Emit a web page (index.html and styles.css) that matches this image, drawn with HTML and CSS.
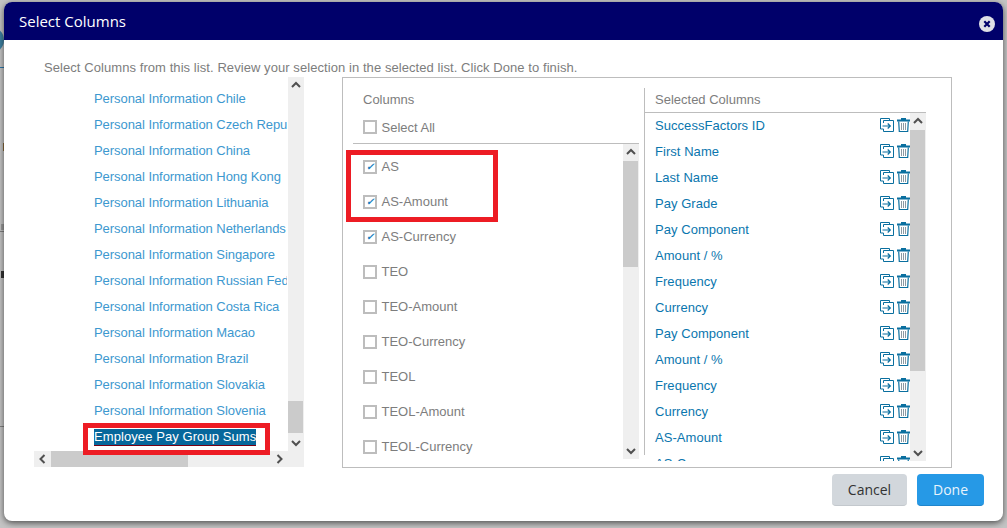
FILE: index.html
```html
<!DOCTYPE html>
<html lang="en">
<head>
<meta charset="utf-8">
<title>Select Columns</title>
<link rel="stylesheet" href="styles.css">
</head>
<body>
<svg class="defs" width="0" height="0" aria-hidden="true">
  <symbol id="mv" viewBox="0 0 14 14">
    <path d="M9.500 2V.5H.5v10.500H3.500" fill="none" stroke="#0a6f9f" stroke-width="1"/>
    <path d="M3.500 5V2.500h10v11h-10V11" fill="none" stroke="#0a6f9f" stroke-width="1"/>
    <path d="M2.500 8h7.500M7.700 5.500L10.300 8 7.700 10.500" fill="none" stroke="#0a6f9f" stroke-width="1.200"/>
  </symbol>
  <symbol id="tr" viewBox="0 0 13 14">
    <path d="M0 1.500h13v2H0zM4 0h5v1.500H4z" fill="#0a6f9f"/>
    <path d="M1.700 3.500l.6 10h8.400l.6-10" fill="none" stroke="#0a6f9f" stroke-width="1.200"/>
    <path d="M4.500 5v7M6.500 5v7M8.500 5v7" stroke="#7f8f98" stroke-width=".9"/>
  </symbol>
  <symbol id="up" viewBox="0 0 10 8"><path d="M1 6l4-4 4 4" fill="none" stroke="#505050" stroke-width="2"/></symbol>
  <symbol id="dn" viewBox="0 0 10 8"><path d="M1 2l4 4 4-4" fill="none" stroke="#505050" stroke-width="2"/></symbol>
  <symbol id="lf" viewBox="0 0 8 10"><path d="M6 1L2 5l4 4" fill="none" stroke="#505050" stroke-width="2"/></symbol>
  <symbol id="rt" viewBox="0 0 8 10"><path d="M2 1l4 4-4 4" fill="none" stroke="#505050" stroke-width="2"/></symbol>
</svg>

<div class="backdrop">
  <div class="bg-circle"></div>
  <div class="bg-line bg-line-blue"></div>
  <div class="bg-tick"></div>
  <div class="bg-frag bg-frag-y"></div>
  <div class="bg-frag bg-frag-a"></div>
  <div class="bg-line bg-line-gray"></div>
  <div class="bg-line bg-line-low"></div>
  <section class="modal">
    <header class="head">
      <h1>Select Columns</h1>
      <span class="close" aria-label="Close"><svg viewBox="0 0 16 16" width="16" height="16"><circle cx="8" cy="8" r="8" fill="#dfe0e6"/><path d="M5.300 5.300l5.400 5.400M10.700 5.300l-5.400 5.400" stroke="#00006a" stroke-width="2.200"/></svg></span>
    </header>
    <div class="body">
      <p class="intro">Select Columns from this list. Review your selection in the selected list. Click Done to finish.</p>
      <div class="panes">
        <div class="cats">
          <div class="cats-top">
            <ul class="cat-list">
              <li>Personal Information Chile</li>
              <li>Personal Information Czech Republic</li>
              <li>Personal Information China</li>
              <li>Personal Information Hong Kong</li>
              <li>Personal Information Lithuania</li>
              <li>Personal Information Netherlands</li>
              <li>Personal Information Singapore</li>
              <li>Personal Information Russian Federation</li>
              <li>Personal Information Costa Rica</li>
              <li>Personal Information Macao</li>
              <li>Personal Information Brazil</li>
              <li>Personal Information Slovakia</li>
              <li>Personal Information Slovenia</li>
              <li class="sel"><span>Employee Pay Group Sums</span></li>
            </ul>
            <div class="vbar cats-bar">
              <svg class="arr"><use href="#up"/></svg>
              <div class="track"><div class="thumb cats-thumb"></div></div>
              <svg class="arr"><use href="#dn"/></svg>
            </div>
          </div>
          <div class="hbar">
            <svg class="harr"><use href="#lf"/></svg>
            <div class="htrack"><div class="hthumb"></div></div>
            <svg class="harr"><use href="#rt"/></svg>
          </div>
          <div class="mark mark-sel"></div>
        </div>

        <div class="box">
          <div class="cols">
            <div class="cols-title">Columns</div>
            <label class="all"><i class="cb"></i>Select All</label>
            <div class="cols-scroll">
              <ul class="col-list">
                <li><i class="cb on"></i>AS</li>
                <li><i class="cb on"></i>AS-Amount</li>
                <li><i class="cb on"></i>AS-Currency</li>
                <li><i class="cb"></i>TEO</li>
                <li><i class="cb"></i>TEO-Amount</li>
                <li><i class="cb"></i>TEO-Currency</li>
                <li><i class="cb"></i>TEOL</li>
                <li><i class="cb"></i>TEOL-Amount</li>
                <li><i class="cb"></i>TEOL-Currency</li>
              </ul>
              <div class="vbar cols-bar">
                <svg class="arr"><use href="#up"/></svg>
                <div class="track"><div class="thumb cols-thumb"></div></div>
                <svg class="arr"><use href="#dn"/></svg>
              </div>
            </div>
            <div class="mark mark-cols"></div>
          </div>
          <div class="divider"></div>
          <div class="chosen">
            <div class="chosen-title">Selected Columns</div>
            <div class="chosen-scroll">
              <ul class="chosen-list">
                <li><span>SuccessFactors ID</span><svg class="mv"><use href="#mv"/></svg><svg class="tr"><use href="#tr"/></svg></li>
                <li><span>First Name</span><svg class="mv"><use href="#mv"/></svg><svg class="tr"><use href="#tr"/></svg></li>
                <li><span>Last Name</span><svg class="mv"><use href="#mv"/></svg><svg class="tr"><use href="#tr"/></svg></li>
                <li><span>Pay Grade</span><svg class="mv"><use href="#mv"/></svg><svg class="tr"><use href="#tr"/></svg></li>
                <li><span>Pay Component</span><svg class="mv"><use href="#mv"/></svg><svg class="tr"><use href="#tr"/></svg></li>
                <li><span>Amount / %</span><svg class="mv"><use href="#mv"/></svg><svg class="tr"><use href="#tr"/></svg></li>
                <li><span>Frequency</span><svg class="mv"><use href="#mv"/></svg><svg class="tr"><use href="#tr"/></svg></li>
                <li><span>Currency</span><svg class="mv"><use href="#mv"/></svg><svg class="tr"><use href="#tr"/></svg></li>
                <li><span>Pay Component</span><svg class="mv"><use href="#mv"/></svg><svg class="tr"><use href="#tr"/></svg></li>
                <li><span>Amount / %</span><svg class="mv"><use href="#mv"/></svg><svg class="tr"><use href="#tr"/></svg></li>
                <li><span>Frequency</span><svg class="mv"><use href="#mv"/></svg><svg class="tr"><use href="#tr"/></svg></li>
                <li><span>Currency</span><svg class="mv"><use href="#mv"/></svg><svg class="tr"><use href="#tr"/></svg></li>
                <li><span>AS-Amount</span><svg class="mv"><use href="#mv"/></svg><svg class="tr"><use href="#tr"/></svg></li>
                <li><span>AS-Currency</span><svg class="mv"><use href="#mv"/></svg><svg class="tr"><use href="#tr"/></svg></li>
              </ul>
              <div class="vbar chosen-bar">
                <svg class="arr"><use href="#up"/></svg>
                <div class="track"><div class="thumb chosen-thumb"></div></div>
                <svg class="arr"><use href="#dn"/></svg>
              </div>
            </div>
          </div>
        </div>
      </div>
      <footer class="foot">
        <button class="btn cancel">Cancel</button>
        <button class="btn done">Done</button>
      </footer>
    </div>
  </section>
</div>
</body>
</html>
```
FILE: styles.css
```css
* { box-sizing: border-box; }
html, body { margin: 0; height: 100%; }
body { overflow: hidden; background: #c4c4c4; font-family: "Liberation Sans", Arial, sans-serif; }
.defs { position: absolute; }
ul { list-style: none; margin: 0; padding: 0; }
.backdrop { position: relative; width: 1007px; height: 528px; padding: 2px 4px 7px 4px; background: #c4c4c4; overflow: hidden; }
.bg-circle { position: absolute; left: -22px; top: 27px; width: 26px; height: 26px; border-radius: 50%; background: #3d7f9f; }
.bg-line { position: absolute; left: 0; width: 4px; height: 1px; }
.bg-line-blue { top: 67px; background: #2a76a8; }
.bg-line-gray { top: 231px; background: #808080; }
.bg-line-low { top: 426px; background: #808080; }
.bg-tick { position: absolute; left: 3px; top: 143px; width: 1px; height: 8px; background: #8a6a3a; }
.bg-frag { position: absolute; left: 1px; width: 3px; }
.bg-frag-y { top: 224px; height: 6px; background: #9a9a9a; }
.bg-frag-a { top: 271px; height: 7px; background: #333; }
.modal { position: relative; width: 999px; height: 519px; background: #fff; border-radius: 8px; box-shadow: 0 2px 6px rgba(0,0,0,.6); display: flex; flex-direction: column; overflow: hidden; }
.head { height: 38px; background: #00006a; display: flex; align-items: center; justify-content: space-between; padding: 0 8px 0 15px; flex: none; }
.head h1 { margin: 0; color: #fff; font: 400 15px "Open Sans", sans-serif; }
.close { display: flex; margin-top: 5px; }
.body { flex: 1; display: flex; flex-direction: column; padding: 21px 19px 0 30px; min-height: 0; }
.intro { margin: 0; font-size: 13px; line-height: 14px; color: #7d7d7d; padding-left: 10px; height: 16px; letter-spacing: .07px; white-space: nowrap; }
.panes { display: flex; height: 391px; }
.cats { position: relative; width: 270px; height: 390px; flex: none; }
.cats-top { display: flex; height: 374px; }
.cat-list { width: 254px; overflow: hidden; padding-top: 9px; padding-left: 60px; font-size: 13px; line-height: 26px; color: #3d98cf; }
.cat-list li { white-space: nowrap; letter-spacing: -.06px; height: 26px; width: 193px; overflow: hidden; }
.cat-list .sel { overflow: visible; letter-spacing: .08px; }
.cat-list .sel span { background: #06679b; color: #fff; border-bottom: 1px solid #7a0012; padding-bottom: 1px; }
.vbar { width: 16px; display: flex; flex-direction: column; background: #efefef; flex: none; }
.arr { width: 16px; height: 16px; padding: 4px 3px; flex: none; }
.track { flex: 1; min-height: 0; }
.thumb { background: #cbcbcb; width: 15px; }
.cats-thumb { height: 32px; margin-top: 308px; }
.hbar { height: 16px; width: 270px; background: #efefef; display: flex; padding-right: 16px; }
.harr { width: 17px; height: 16px; padding: 3px 4px; flex: none; }
.htrack { flex: 1; }
.hthumb { height: 16px; width: 137px; background: #cbcbcb; }
.mark { position: absolute; border: 5px solid #ed1c24; }
.mark-sel { left: 49px; top: 346px; width: 187px; height: 32px; }
.box { margin-left: 38px; width: 610px; height: 391px; border: 1px solid #bdbdbd; display: flex; padding: 10px 0 0 0; }
.cols { position: relative; width: 301px; flex: none; height: 379px; }
.cols-title { padding-left: 20px; font-size: 13px; line-height: 16px; color: #7d7d7d; height: 24px; padding-top: 4px; }
.all { display: flex; align-items: flex-start; font-size: 13px; line-height: 16px; color: #7d7d7d; border-bottom: 1px solid #bdbdbd; margin: 0 5px 0 10px; padding: 8px 0 0 10px; height: 32px; }
.cb { display: block; width: 14px; height: 14px; margin-right: 4.500px; border: 2px solid #bdbdbd; background: #fff; flex: none; position: relative; }
.all .cb { margin-top: 0; }
.cb.on::after { content: "✓"; position: absolute; left: 1px; top: -1px; font-size: 10px; line-height: 12px; font-weight: 700; color: #1a7fc0; }
.cols-scroll { display: flex; height: 315px; margin-right: 5px; }
.col-list { flex: 1; overflow: hidden; padding-left: 20px; padding-top: 5px; }
.col-list li { display: flex; align-items: center; height: 35px; font-size: 13px; color: #7d7d7d; }
.cols-thumb { height: 106px; margin-top: 1px; }
.mark-cols { left: 3px; top: 62px; width: 152px; height: 72px; }
.divider { width: 1px; height: 367px; background: #bdbdbd; flex: none; }
.chosen { flex: 1; min-width: 0; margin-right: 25px; }
.chosen-title { height: 25px; border-bottom: 1px solid #bdbdbd; padding: 4px 0 0 10px; font-size: 13px; line-height: 16px; color: #7d7d7d; }
.chosen-scroll { display: flex; height: 348px; overflow: hidden; }
.chosen-list { flex: 1; overflow: hidden; margin-top: -1px; }
.chosen-list li { display: flex; align-items: center; height: 26px; padding-left: 10px; font-size: 13px; letter-spacing: .05px; color: #0a76ae; }
.chosen-list span { flex: 1; }
.mv { width: 14px; height: 14px; margin-right: 3px; }
.tr { width: 13px; height: 14px; }
.chosen-bar { width: 16px; }
.chosen-thumb { height: 241px; margin-top: 1px; }
.foot { display: flex; justify-content: flex-end; gap: 10px; padding-top: 6px; }
.btn { width: 75px; height: 32px; border: 0; border-radius: 4px; font: 400 14px "Open Sans", sans-serif; }
.cancel { background: #d2d7dc; color: #333; border-bottom: 1px solid #c3c8cd; }
.done { width: 67px; background: #2699e6; color: #e8f4fc; border-bottom: 1px solid #1f85cc; }
```
